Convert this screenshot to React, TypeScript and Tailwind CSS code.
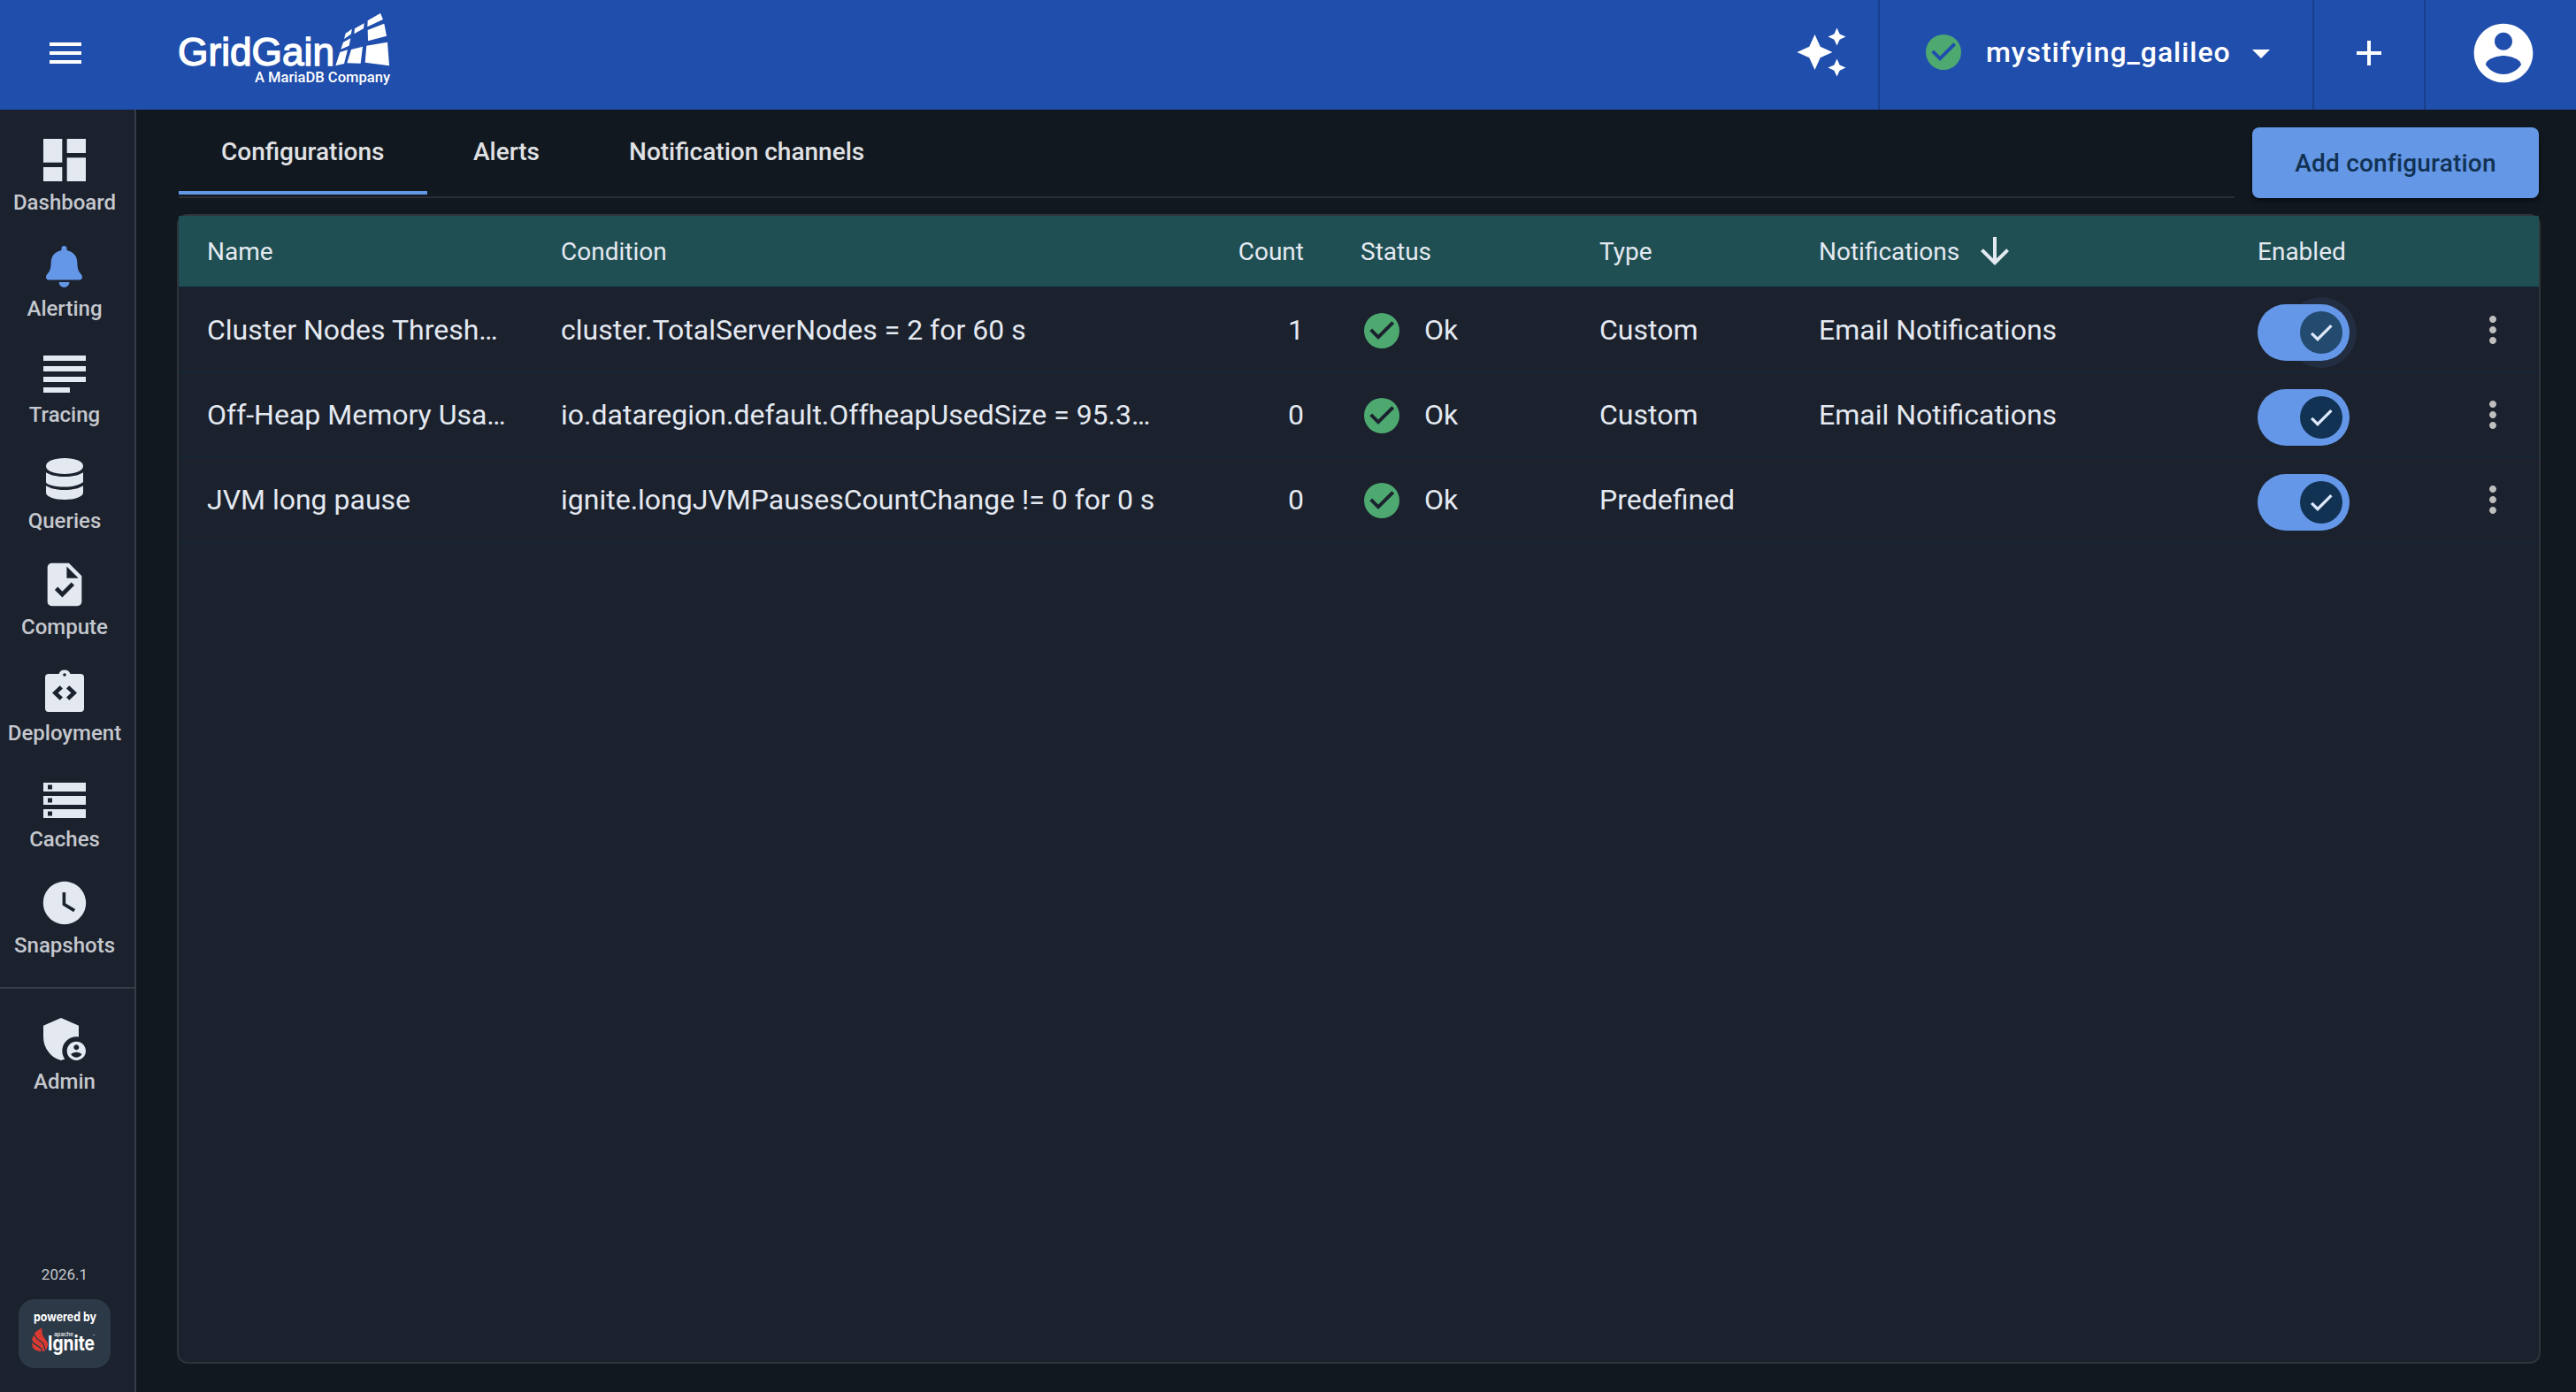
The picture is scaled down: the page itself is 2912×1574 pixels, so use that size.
import { FC, ReactNode } from "react";
import {
    MdAdd,
    MdAdminPanelSettings,
    MdArrowDownward,
    MdArrowDropDown,
    MdAutoAwesome,
    MdDashboard,
    MdMenu,
    MdMoreVert,
    MdTask,
    MdWatchLater,
} from "react-icons/md";

const BellIcon: FC = () => (
    <svg viewBox="0 0 41 47" className="mr-px h-[47px] w-[41px]" fill="currentColor">
        <path d="M20.5 0a3 3 0 0 1 3 3v2c7 1.3 11.5 6.5 11.8 13 .2 7.5 1 10.5 4.7 14.5 2 2.3.8 6-1.5 6h-36c-2.3 0-3.5-3.7-1.5-6 3.7-4 4.500-7 4.700-14.500.3-6.500 4.800-11.700 11.800-13V3a3 3 0 0 1 3-3ZM14.500 41h12a6 6 0 0 1-12 0Z" />
    </svg>
);

const TracingIcon: FC = () => (
    <svg viewBox="0 0 48 48" className="size-12" fill="currentColor">
        <path d="M0 5h48v6H0zM0 17h48v6H0zM0 29h48v6H0zM0 41h30v6H0z" />
    </svg>
);

const DatabaseIcon: FC = () => (
    <svg viewBox="0 0 42 47" className="mr-px h-[47px] w-[42px]" fill="currentColor">
        <path d="M0 9C0 3.500 9 0 21 0s21 3.500 21 9-9 9-21 9S0 14.500 0 9Z" />
        <path d="M0 16.300c5 3.200 12 4.700 21 4.700s16-1.500 21-4.700V27c-4 3.500-11.500 5.500-21 5.500S0 30.500 0 27Z" />
        <path d="M0 31.300C5 34.500 12 36 21 36s16-1.500 21-4.700V39c0 4.500-9.400 8-21 8S0 43.500 0 39Z" />
    </svg>
);

const DeploymentIcon: FC = () => (
    <svg viewBox="0 0 44 48" className="h-12 w-11" fill="currentColor">
        <path fillRule="evenodd" d="M4 5h11.500a7 7 0 0 1 13 0H40a4 4 0 0 1 4 4v35a4 4 0 0 1-4 4H4a4 4 0 0 1-4-4V9a4 4 0 0 1 4-4Zm18-.800a1.800 1.800 0 1 0 0 3.600 1.800 1.800 0 0 0 0-3.600ZM16.700 18.200 8 26.500l8.700 8.300 3.300-3.200-5.400-5.100L20 21.400Zm10.600 0L24 21.400l5.400 5.100-5.400 5.100 3.300 3.200 8.700-8.300Z" />
    </svg>
);

const CachesIcon: FC = () => (
    <svg viewBox="0 0 48 40" className="mt-2 h-10 w-12" fill="currentColor">
        <path fillRule="evenodd" d="M0 0h48v10H0zM0 15h48v10H0zM0 30h48v10H0zM5 2.500h5v5H5zM5 17.500h5v5H5zM5 32.500h5v5H5z" />
    </svg>
);

const OkIcon: FC<{ className?: string }> = ({ className = "" }) => (
    <svg viewBox="0 0 40 40" className={"size-10 shrink-0 " + className}>
        <path fill="#4ea971" fillRule="evenodd" d="M20 0a20 20 0 1 0 0 40 20 20 0 0 0 0-40Zm-4 30L6.300 20.300l2.800-2.800 6.900 6.900L31.300 9.200l2.800 2.800Z" />
    </svg>
);

const AccountIcon: FC = () => (
    <svg viewBox="0 0 24 24" className="size-20" fill="currentColor">
        <path d="M12 2C6.480 2 2 6.480 2 12s4.480 10 10 10 10-4.480 10-10S17.520 2 12 2zm0 3c1.660 0 3 1.340 3 3s-1.340 3-3 3-3-1.340-3-3 1.340-3 3-3zm0 14.200c-2.500 0-4.710-1.280-6-3.220.03-1.990 4-3.080 6-3.080 1.990 0 5.970 1.090 6 3.080-1.290 1.940-3.500 3.220-6 3.220z" />
    </svg>
);

const Logo: FC = () => (
    <svg viewBox="0 0 240 120" className="ml-26 h-[120px] w-60" fill="white">
        <text x="-1" y="73.500" fontFamily="Liberation Sans, Arial, sans-serif" fontSize="45" stroke="white" strokeWidth="1.400" textLength="177" lengthAdjust="spacingAndGlyphs">GridGain</text>
        <path d="M213.700 23.300 228 15l3 7-17.700 8.300ZM213.700 34l18.600-7.300L235 40.700l-21 5.600ZM212.300 51.700l23.700-4 2 26.600-27.300-3.600Z" />
        <path d="m199 32.300 10.700-6-.7 6-10.700 6ZM195 56l13-3.300-2.300 19-15.400-.4Z" />
        <path d="m188.700 37.700 7.300-5-1.300 6L187 44ZM186 47.700l8.300-4.400-1.600 8.400-9.400 4ZM182.300 59l8.700-2.700L187 72l-9.700 2.300Z" />
        <text x="86" y="93" fontFamily="Roboto, sans-serif" fontSize="16" fontWeight="500" textLength="153" lengthAdjust="spacingAndGlyphs">A MariaDB Company</text>
    </svg>
);

const IgniteBadge: FC = () => (
    <div className="h-[78px] w-26 overflow-hidden rounded-[18px] bg-[#2c3946]">
        <svg viewBox="0 0 104 78" className="h-[78px] w-26" fill="white" fontFamily="Inter, sans-serif">
            <text x="17" y="25" fontSize="14" fontWeight="700" textLength="71" lengthAdjust="spacingAndGlyphs">powered by</text>
            <path fill="#d93a32" d="M26.500 32.500c-6 3-9.500 6-8.500 8-3 2-3.500 7-2.500 9-1 4 1 8.500 8.500 9.500h5c3-2.500 4.500-6 4-9-.5-4-8-7-6.500-17.500Z" />
            <path fill="none" stroke="#2c3946" strokeWidth="1.300" d="M18 39.500c.5 8 12 6.500 11.500 18M15 46.500c2 7 10.500 5 11.500 12.500" />
            <text x="40" y="41.500" fontSize="6" fontWeight="500" textLength="22" lengthAdjust="spacingAndGlyphs">apache</text>
            <text x="33" y="57.500" fontSize="23.500" fontWeight="700" textLength="53" lengthAdjust="spacingAndGlyphs">Ignite</text>
            <text x="84" y="43" fontSize="3.500">™</text>
        </svg>
    </div>
);

type NavItemProps = { label: string; icon: ReactNode; active?: boolean };

const navItems: NavItemProps[] = [
    { label: "Dashboard", icon: <MdDashboard className="size-16" /> },
    { label: "Alerting", icon: <BellIcon />, active: true },
    { label: "Tracing", icon: <TracingIcon /> },
    { label: "Queries", icon: <DatabaseIcon /> },
    { label: "Compute", icon: <MdTask className="size-[58px]" /> },
    { label: "Deployment", icon: <DeploymentIcon /> },
    { label: "Caches", icon: <CachesIcon /> },
    { label: "Snapshots", icon: <MdWatchLater className="size-[58px]" /> },
];

const NavItem: FC<NavItemProps> = ({ label, icon, active }) => (
    <div className="flex h-[120px] w-[146px] flex-col items-center">
        <div className={active ? "flex h-[62px] items-center text-[#6497e8]" : "flex h-[62px] items-center text-[#e4e9f1]"}>
            {icon}
        </div>
        <div className="mt-px text-2xl font-medium text-[#c5c8ce]">{label}</div>
    </div>
);

const Toggle: FC<{ focused: boolean }> = ({ focused }) => (
    <div className="relative mt-1.5 h-16 w-26">
        {focused && <div className="absolute -top-2 -right-2 size-20 rounded-full bg-[#222d41]" />}
        <div className="relative flex h-16 w-26 items-center justify-end rounded-full bg-[#6497e8] pr-2">
            <div className={focused ? "flex size-12 items-center justify-center rounded-full bg-[#234a6f]" : "flex size-12 items-center justify-center rounded-full bg-[#123253]"}>
                <svg viewBox="0 0 24 24" className="size-8" fill="#dce7fa">
                    <path d="M19.690 5.230 8.960 15.960l-4.230-4.230L2.960 13.500l6 6L21.460 7Z" />
                </svg>
            </div>
        </div>
    </div>
);

const rows = [
    { name: "Cluster Nodes Thresh…", condition: "cluster.TotalServerNodes = 2 for 60 s", count: 1, type: "Custom", notifications: "Email Notifications", focused: true },
    { name: "Off-Heap Memory Usa…", condition: "io.dataregion.default.OffheapUsedSize = 95.3…", count: 0, type: "Custom", notifications: "Email Notifications", focused: false },
    { name: "JVM long pause", condition: "ignite.longJVMPausesCountChange != 0 for 0 s", count: 0, type: "Predefined", notifications: "", focused: false },
];

const columns = "grid grid-cols-[400px_740px_164px_270px_248px_496px_228px_1fr] items-center border-b-2 border-[#132634] pl-8 ";

const Header: FC = () => (
    <header className="flex h-31 shrink-0 bg-[#204eac] text-white">
        <div className="flex items-center pb-1">
            <MdMenu className="ml-[50px] size-12" />
            <Logo />
        </div>
        <div className="ml-auto flex items-center pr-[34px] pb-[7px]">
            <MdAutoAwesome className="size-[60px]" />
        </div>
        <div className="flex w-[491px] items-center border-l-2 border-[#193f8d] pr-[34px] pb-1 pl-[52px]">
            <OkIcon className="-mt-0.5" />
            <div className="-mt-0.5 ml-7 text-[32px] font-medium tracking-[0.03em]">mystifying_galileo</div>
            <MdArrowDropDown className="ml-auto size-12" />
        </div>
        <div className="flex w-[126px] items-center justify-center border-l-2 border-[#193f8d] pb-1">
            <MdAdd className="size-12" />
        </div>
        <div className="flex w-[172px] items-center border-l-2 border-[#193f8d] pb-1 pl-12">
            <AccountIcon />
        </div>
    </header>
);

const Sidebar: FC = () => (
    <aside className="flex w-[154px] shrink-0 flex-col border-r-2 border-[#373d47] bg-[#1b212d] pt-[26px]">
        {navItems.map((item) => (
            <NavItem key={item.label} {...item} />
        ))}
        <div className="mt-1.5 border-t-2 border-[#373d47] pt-[26px]">
            <NavItem label="Admin" icon={<MdAdminPanelSettings className="size-16" />} />
        </div>
        <div className="mt-auto flex w-[146px] flex-col items-center gap-4 pb-[27px]">
            <div className="text-[17px] leading-6 text-[#c5c8ce]">2026.1</div>
            <IgniteBadge />
        </div>
    </aside>
);

export default function App() {
    return (
        <div className="flex h-[1574px] w-[2912px] flex-col overflow-hidden bg-[#11181f] font-['Roboto',sans-serif] text-[#e4e9f1]">
            <Header />
            <div className="flex min-h-0 grow">
                <Sidebar />
                <main className="grow pl-[46px]">
                    <div className="ml-0.5 flex h-[100px] w-[2668px] items-end gap-5">
                        <nav className="flex h-[100px] grow gap-1 border-b-2 border-[#2a2d36] pb-0.5 text-[28px] font-medium text-[#e0e1e4]">
                            <div className="flex w-[281px] items-center border-b-4 border-[#6497e8] pt-1 pl-12">Configurations</div>
                            <div className="flex items-center border-b-4 border-transparent px-12 pt-1">Alerts</div>
                            <div className="ml-px flex items-center border-b-4 border-transparent px-12 pt-1">Notification channels</div>
                        </nav>
                        <button className="h-20 w-[324px] rounded-lg bg-[#6497e6] pt-0.5 text-[28px] font-medium tracking-[0.007em] text-[#123253] shadow-md shadow-black/40">
                            Add configuration
                        </button>
                    </div>
                    <div className="mt-[18px] h-[1300px] w-[2672px] rounded-xl border-2 border-[#2f333a] bg-[#1b212d]">
                        <div className={columns + "h-[82px] bg-[#1f4f53] pt-0.5 text-[28px]"}>
                            <div>Name</div>
                            <div>Condition</div>
                            <div className="pr-16 text-right">Count</div>
                            <div>Status</div>
                            <div>Type</div>
                            <div className="flex items-center gap-4">
                                Notifications
                                <MdArrowDownward className="-mt-0.5 size-12" />
                            </div>
                            <div>Enabled</div>
                        </div>
                        {rows.map((row) => (
                            <div key={row.name} className={columns + "h-24 text-[32px]"}>
                                <div>{row.name}</div>
                                <div>{row.condition}</div>
                                <div className="pr-16 text-right">{row.count}</div>
                                <div className="flex items-center gap-7 pl-1">
                                    <OkIcon className="mt-0.5" />
                                    Ok
                                </div>
                                <div>{row.type}</div>
                                <div>{row.notifications}</div>
                                <Toggle focused={row.focused} />
                                <MdMoreVert className="ml-3.5 size-12 text-[#bfbfbf]" />
                            </div>
                        ))}
                    </div>
                </main>
            </div>
        </div>
    );
}
